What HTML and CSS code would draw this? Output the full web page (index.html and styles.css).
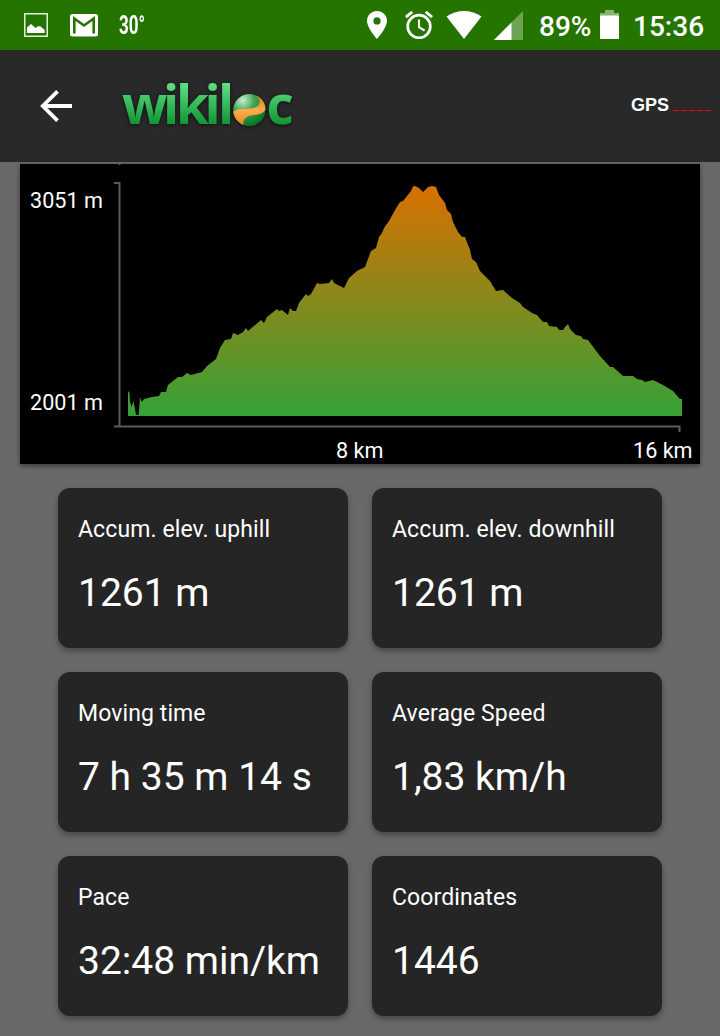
FILE: index.html
```
<!DOCTYPE html>
<html lang="en">
<head>
    <meta charset="UTF-8">
    <meta name="viewport" content="width=device-width, initial-scale=1.0">
    <title>Wikiloc</title>
    <link rel="stylesheet" href="styles.css">
</head>
<body>

<div class="status-bar">
    <svg class="ico-image" width="24" height="24" viewBox="0 0 24 24">
        <rect x="0.75" y="0.75" width="22.5" height="22.5" fill="none" stroke="#e4f0df" stroke-width="1.5"/>
        <path d="M3 20v-5.500l4-3.500 4.500 4 3-2 2 .5 4.200 3.500v3z" fill="#fff"/>
    </svg>
    <svg class="ico-mail" width="28" height="23" viewBox="0 0 28 23">
        <rect width="28" height="22.500" rx="2.500" fill="#fff"/>
        <path d="M4.300 19.500V4.500L14 11.500l9.700-7v15" fill="none" stroke="#257400" stroke-width="2.600"/>
    </svg>
    <span class="temp">30°</span>
    <div class="status-right">
        <svg class="ico-pin" width="20" height="28" viewBox="0 0 20 28">
            <path fill-rule="evenodd" d="M10 0C4.500 0 0 4.400 0 9.800 0 17 10 28 10 28s10-11 10-18.200C20 4.400 15.500 0 10 0zm0 6.300a3.600 3.600 0 1 1 0 7.200 3.600 3.600 0 0 1 0-7.200z" fill="#fff"/>
        </svg>
        <svg class="ico-alarm" width="28" height="28" viewBox="0 0 28 28" fill="none" stroke="#fff">
            <circle cx="14" cy="15.500" r="11.300" stroke-width="2.700"/>
            <path d="M.9 6.200 7.300 .9M27.100 6.200 20.700 .9" stroke-width="2.800"/>
            <path d="M14 8.500v7.700l5.600 3.400" stroke-width="2.100"/>
        </svg>
        <svg class="ico-wifi" width="36" height="28" viewBox="0 0 36 28">
            <path d="M.5 5.500C5.500 2 11.500 0 18 0s12.500 2 17.500 5.500L18 28z" fill="#fff"/>
        </svg>
        <svg class="ico-signal" width="29" height="29" viewBox="0 0 29 29">
            <path d="M29 0v29H0z" fill="#6ea255"/>
            <path d="M17.500 11.500V29H0z" fill="#fff"/>
        </svg>
        <span class="battery-level">89%</span>
        <svg class="ico-battery" width="19" height="29" viewBox="0 0 19 29">
            <path d="M0 3h5V0h9v3h5v3H0z" fill="#86b373"/>
            <path d="M0 5.500h19V29H0z" fill="#fff"/>
        </svg>
        <span class="clock">15:36</span>
    </div>
</div>

<div class="header">
    <svg class="back" width="32" height="32" viewBox="0 0 32 32" fill="none" stroke="#fff" stroke-width="3.800">
        <path d="M32 16H3M17.500 1.300 2.800 16l14.700 14.700"/>
    </svg>
    <svg class="logo" width="180" height="84" viewBox="0 -14 180 84">
        <defs>
            <linearGradient id="letters" gradientUnits="userSpaceOnUse" x1="0" y1="5" x2="0" y2="47">
                <stop offset="0" stop-color="#5fe088"/>
                <stop offset="1" stop-color="#0f9430"/>
            </linearGradient>
            <radialGradient id="globe" cx="0.3" cy="0.2" r="0.8">
                <stop offset="0" stop-color="#c9f0cf"/>
                <stop offset="0.45" stop-color="#3fa458"/>
                <stop offset="1" stop-color="#0a7a26"/>
            </radialGradient>
            <linearGradient id="ribbon" x1="0" y1="0" x2="0" y2="1">
                <stop offset="0" stop-color="#d9741f"/>
                <stop offset="0.5" stop-color="#ffae45"/>
                <stop offset="1" stop-color="#ee8429"/>
            </linearGradient>
        </defs>
        <text class="logo-text" x="5 46 59 87.500 101" y="46">wikil</text>
        <circle cx="132.300" cy="32" r="16" fill="url(#globe)"/>
        <path d="M138.500 17.300C145 20 148.800 25.500 148.300 31.500 146.500 35.500 141 36.800 135.500 37.300 129 38 125.500 41.500 126.500 47 120.500 44.500 116.600 39 116.400 33.500 120 30.800 125 31 130 30.700 137 30.300 142.500 29 142.600 24.500 142.600 21.500 141 19.500 138.500 17.300z" fill="url(#ribbon)"/>
        <text class="logo-text" x="149.500" y="46">c</text>
    </svg>
    <div class="gps">
        <span>GPS</span>
        <div class="gps-bars"><i></i><i></i><i></i><i></i><i></i></div>
    </div>
</div>

<div class="content">
    <div class="chart">
        <svg width="680" height="300" viewBox="0 0 680 300">
            <defs>
                <linearGradient id="elevation" gradientUnits="userSpaceOnUse" x1="0" y1="22" x2="0" y2="252">
                    <stop offset="0" stop-color="#d87000"/>
                    <stop offset="1" stop-color="#36a238"/>
                </linearGradient>
            </defs>
            <path fill="url(#elevation)" d="M108 252V227L109.500 229 110 238 111.700 243 113.300 237 114.700 243 116 251 118.500 251 119.300 243 120 233 121 236 122 238 124 235 132 233 139 232 141 228 146 228 148 221 153 217 158 213 162 213 167 209 171 211 182 208 187 202 196 195 200 184 205 176 211 175 213 169 218 171 223 168 226 164 228 167 241 156 244 159 247 153 257 145 259 147 262 146 268 151 270 144 273 147 276 147 279 139 286 130 288 132 291 130 297 119 300 120 309 119 312 115 314 119 324 124 329 114 337 107 345 103 351 87 356 84 359 73 362 69 364 64 369 57 375 46 380 38 383 37 391 27 393 22.500 395 22 397 23 399 24 403 28 408 23 412 22 416 23 419 31 425 39 427 46 431 50 433 58 438 68 442 73 445 73 450 86 452 95 456 98 460 107 470 117 476 127 483 126 492 134 500 139 503 143 512 149 517 151 523 158 527 158 529 162 537 163 539 166 543 166 545 163 548 160 550 165 556 171 561 172 563 175 568 176 580 192 590 203 593 203 603 212 613 212 617 215 622 216 625 218 633 216 643 221 653 227 660 235 662 235V252z"/>
            <path class="axis" d="M94 19h5.500v244M94 262.500h565.500v5.500M98.500 0h2"/>
            <text class="axis-label" x="10" y="44">3051 m</text>
            <text class="axis-label" x="10" y="246">2001 m</text>
            <text class="axis-label" x="316" y="294">8 km</text>
            <text class="axis-label" x="613" y="294">16 km</text>
        </svg>
    </div>

    <div class="cards">
        <div class="card">
            <div class="label">Accum. elev. uphill</div>
            <div class="value">1261 m</div>
        </div>
        <div class="card">
            <div class="label">Accum. elev. downhill</div>
            <div class="value">1261 m</div>
        </div>
        <div class="card">
            <div class="label">Moving time</div>
            <div class="value">7 h 35 m 14 s</div>
        </div>
        <div class="card">
            <div class="label">Average Speed</div>
            <div class="value">1,83 km/h</div>
        </div>
        <div class="card">
            <div class="label">Pace</div>
            <div class="value">32:48 min/km</div>
        </div>
        <div class="card">
            <div class="label">Coordinates</div>
            <div class="value">1446</div>
        </div>
    </div>
</div>

</body>
</html>
```

FILE: styles.css
```
* {
    box-sizing: border-box;
}
body {
    margin: 0;
    height: 1036px;
    overflow: hidden;
    font-family: Roboto, sans-serif;
    background-color: #696969;
    color: #fff;
}
svg {
    display: block;
    flex-shrink: 0;
}
.status-bar {
    display: flex;
    height: 50px;
    padding: 0 16px 0 24px;
    background-color: #257400;
}
.ico-image {
    margin-top: 13px;
}
.ico-mail {
    margin: 14px 0 0 22px;
}
.temp {
    margin-left: 21px;
    font-size: 25px;
    font-weight: bold;
    line-height: 52px;
    transform: scaleX(0.68);
    transform-origin: left;
}
.status-right {
    display: flex;
    margin-left: auto;
    font-size: 28px;
    font-weight: 500;
    line-height: 53px;
}
.ico-pin, .ico-alarm, .ico-wifi, .ico-signal {
    margin-top: 11px;
}
.ico-alarm {
    margin-left: 18px;
}
.ico-wifi {
    margin-left: 13px;
}
.ico-signal {
    margin-left: 12px;
}
.battery-level {
    width: 52px;
    margin-left: 16px;
}
.ico-battery {
    margin: 10px 0 0 9px;
}
.clock {
    width: 71px;
    margin-left: 14px;
}
.header {
    display: flex;
    align-items: center;
    height: 112px;
    padding: 0 9px 0 40px;
    background-color: #292929;
}
.logo {
    margin-left: 45px;
    filter: drop-shadow(0 1px 2px rgba(0, 0, 0, 0.6));
}
.logo-text {
    font-family: "Open Sans", sans-serif;
    font-size: 53px;
    font-weight: bold;
    fill: url(#letters);
}
.gps {
    display: flex;
    margin-left: auto;
    padding-bottom: 2px;
    font-family: "Liberation Sans", Arial, sans-serif;
    font-size: 18px;
    font-weight: bold;
    line-height: 22px;
}
.gps-bars {
    display: flex;
    gap: 2px;
    margin: 16px 0 0 4px;
}
.gps-bars i {
    width: 6px;
    height: 1px;
    background-color: #f00;
}
.content {
    padding: 2px 20px 0;
}
.chart {
    height: 300px;
    background-color: #000;
    box-shadow: 0 2px 5px rgba(0, 0, 0, 0.45);
}
.axis {
    fill: none;
    stroke: #5c5c5c;
    stroke-width: 2;
}
.axis-label {
    font-size: 21.6px;
    fill: #fff;
}
.cards {
    display: grid;
    grid-template-columns: 290px 290px;
    gap: 24px;
    justify-content: center;
    margin-top: 24px;
}
.card {
    height: 160px;
    padding: 27px 20px 0;
    border-radius: 12px;
    background-color: #252525;
    box-shadow: 0 3px 6px rgba(0, 0, 0, 0.35);
}
.label {
    font-size: 23px;
    line-height: 30px;
    letter-spacing: 0.1px;
    white-space: nowrap;
}
.value {
    margin-top: 24px;
    font-size: 39px;
    line-height: 49px;
    white-space: nowrap;
}
```
